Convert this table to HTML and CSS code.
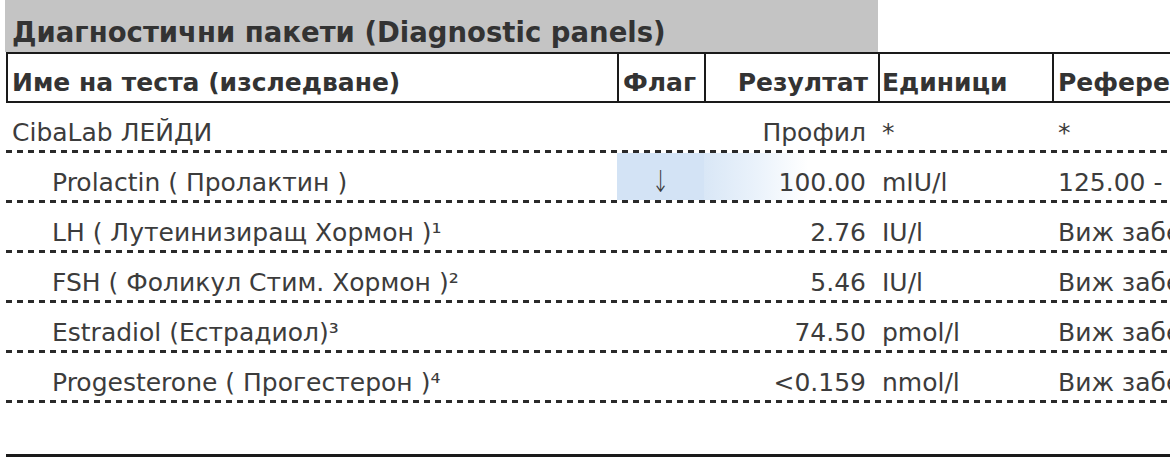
FILE: index.html
```html
<!DOCTYPE html>
<html lang="bg">
<head>
<meta charset="utf-8">
<title>Диагностични пакети</title>
<link rel="stylesheet" href="styles.css">
</head>
<body>
<div class="page">
  <div class="section-title">Диагностични пакети (Diagnostic panels)</div>
  <div class="table">
    <div class="row head">
      <div class="cell name">Име на теста (изследване)</div>
      <div class="cell flag">Флаг</div>
      <div class="cell result">Резултат</div>
      <div class="cell units">Единици</div>
      <div class="cell ref">Референтни граници</div>
    </div>
    <div class="row">
      <div class="cell name">CibaLab ЛЕЙДИ</div>
      <div class="cell flag"></div>
      <div class="cell result">Профил</div>
      <div class="cell units">*</div>
      <div class="cell ref">*</div>
    </div>
    <div class="row">
      <div class="cell name sub">Prolactin ( Пролактин )</div>
      <div class="cell flag low"><span class="arrow">↓</span></div>
      <div class="cell result low-fade">100.00</div>
      <div class="cell units">mIU/l</div>
      <div class="cell ref">125.00 - 600.00</div>
    </div>
    <div class="row">
      <div class="cell name sub">LH ( Лутеинизиращ Хормон )¹</div>
      <div class="cell flag"></div>
      <div class="cell result">2.76</div>
      <div class="cell units">IU/l</div>
      <div class="cell ref">Виж забележка</div>
    </div>
    <div class="row">
      <div class="cell name sub">FSH ( Фоликул Стим. Хормон )²</div>
      <div class="cell flag"></div>
      <div class="cell result">5.46</div>
      <div class="cell units">IU/l</div>
      <div class="cell ref">Виж забележка</div>
    </div>
    <div class="row">
      <div class="cell name sub">Estradiol (Естрадиол)³</div>
      <div class="cell flag"></div>
      <div class="cell result">74.50</div>
      <div class="cell units">pmol/l</div>
      <div class="cell ref">Виж забележка</div>
    </div>
    <div class="row">
      <div class="cell name sub">Progesterone ( Прогестерон )⁴</div>
      <div class="cell flag"></div>
      <div class="cell result">&lt;0.159</div>
      <div class="cell units">nmol/l</div>
      <div class="cell ref">Виж забележка</div>
    </div>
  </div>
  <div class="footer-rule"></div>
</div>
</body>
</html>
```
FILE: styles.css
```css
html, body {
  margin: 0;
  padding: 0;
  background: #ffffff;
  overflow: hidden;
}
body {
  width: 1170px;
  height: 461px;
  font-family: "DejaVu Sans", Verdana, sans-serif;
  color: #3c3c3c;
}
.page {
  padding-left: 5px;
  width: 1165px;
  overflow: hidden;
}
.section-title {
  width: 873px;
  height: 52px;
  box-sizing: border-box;
  background: #c4c4c4;
  font-size: 27.5px;
  font-weight: bold;
  color: #333333;
  padding: 16px 0 0 7px;
  line-height: 32px;
  white-space: nowrap;
  overflow: hidden;
}
.table {
  margin-left: 1px;
}
.row {
  display: grid;
  grid-template-columns: 611px 87px 174px 174px 1fr;
  height: 50px;
  background-image: repeating-linear-gradient(90deg, #2a2a2a 0 6px, transparent 6px 11px);
  background-size: 100% 3px;
  background-position: 0 100%;
  background-repeat: no-repeat;
}
.row.head {
  height: 51px;
  background: none;
  border-top: 2px solid #1a1a1a;
  border-bottom: 2px solid #1a1a1a;
  box-sizing: border-box;
  font-weight: bold;
  color: #333333;
}
.row.head .cell {
  border-left: 2px solid #1a1a1a;
  padding-top: 14px;
}
.row.head .cell.name { padding-left: 4px; }
.row.head .cell.flag { text-align: left; padding-left: 4px; }
.row.head .cell.result { padding-right: 10px; }
.row.head .cell.units { padding-left: 2px; }
.row.head .cell.ref { padding-left: 4px; }
.cell {
  font-size: 25px;
  line-height: 30px;
  padding-top: 15px;
  box-sizing: border-box;
  white-space: nowrap;
  overflow: hidden;
  min-width: 0;
}
.cell.name { padding-left: 6px; }
.cell.name.sub { padding-left: 46px; }
.cell.flag { text-align: center; overflow: visible; }
.cell.result { text-align: right; padding-right: 12px; }
.cell.units { padding-left: 4px; }
.cell.ref { padding-left: 6px; }
.arrow {
  display: inline-block;
  font-size: 30px;
  font-weight: 200;
  line-height: 28px;
  transform: scaleX(0.7);
}
.row .low {
  background: #d3e3f5;
  margin-bottom: 3px;
}
.row .low-fade {
  background: linear-gradient(90deg, #d9e7f6 0%, #eaf2fb 30%, #ffffff 60%);
  margin-bottom: 3px;
}
.footer-rule {
  margin-top: 51px;
  margin-left: 1px;
  height: 3px;
  background: #1a1a1a;
}
```
